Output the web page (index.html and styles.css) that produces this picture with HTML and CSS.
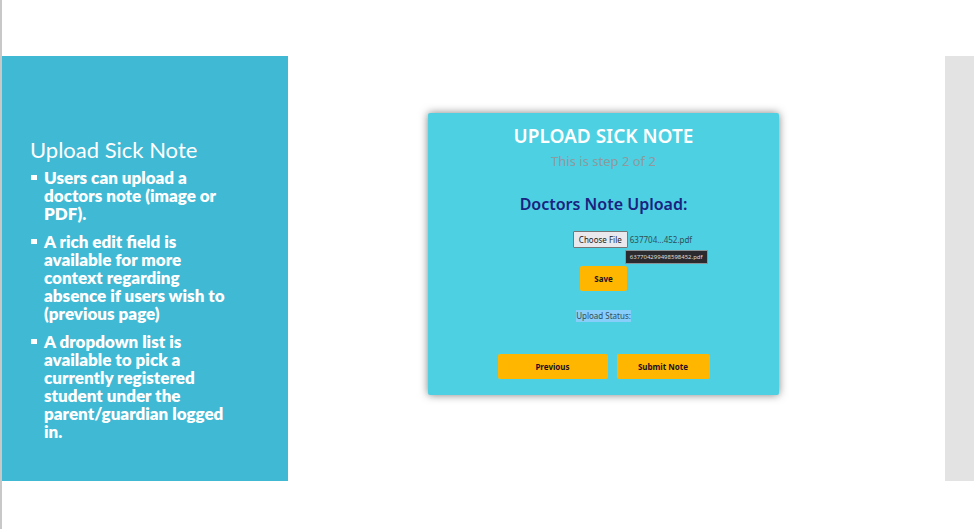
FILE: index.html
```html
<!DOCTYPE html>
<html lang="en">
<head>
<meta charset="utf-8">
<meta name="viewport" content="width=device-width, initial-scale=1">
<title>Upload Sick Note</title>
<link rel="stylesheet" href="styles.css">
</head>
<body>
<div class="slide">
  <aside class="notes">
    <h1 class="notes-title">Upload Sick Note</h1>
    <ul class="notes-list">
      <li>Users can upload a doctors note (image or PDF).</li>
      <li>A rich edit field is available for more context regarding absence if users wish to (previous page)</li>
      <li>A dropdown list is available to pick a currently registered student under the parent/guardian logged in.</li>
    </ul>
  </aside>
  <main class="stage">
    <form class="card">
      <h2 class="card-title">UPLOAD SICK NOTE</h2>
      <p class="step">This is step 2 of 2</p>
      <h3 class="section-title">Doctors Note Upload:</h3>
      <div class="file-row">
        <button type="button" class="choose">Choose File</button>
        <span class="file-name">637704...452.pdf<span class="tooltip" role="tooltip">637704299498598452.pdf</span></span>
      </div>
      <button type="button" class="btn save">Save</button>
      <p class="status"><mark>Upload Status:</mark></p>
      <div class="actions">
        <button type="button" class="btn previous">Previous</button>
        <button type="submit" class="btn submit">Submit Note</button>
      </div>
    </form>
  </main>
  <div class="edge"></div>
</div>
</body>
</html>
```
FILE: styles.css
```css
* {
  box-sizing: border-box;
}

body {
  margin: 0;
  background: #fff;
  font-family: "Noto Sans", "Open Sans", sans-serif;
}

h1, h2, h3, p, ul {
  margin: 0;
  padding: 0;
}

.slide {
  display: grid;
  grid-template-columns: 286px 1fr 29px;
  min-height: 100vh;
  padding: 56px 0 48px;
  border-left: 2px solid #c8c8c8;
}

.notes {
  padding: 80px 52px 36px 28px;
  background: #40b9d4;
  color: #fff;
  font-family: Lato, "Noto Sans", sans-serif;
}

.notes-title {
  font-size: 22px;
  line-height: 28px;
  font-weight: 400;
  white-space: nowrap;
}

.notes-list {
  margin-top: 5px;
  list-style: none;
  font-size: 17px;
  line-height: 18px;
  font-weight: 800;
}

.notes-list li {
  position: relative;
  padding-left: 14px;
}

.notes-list li + li {
  margin-top: 10px;
}

.notes-list li::before {
  content: "";
  position: absolute;
  left: 1px;
  top: 6px;
  width: 6px;
  height: 5px;
  background: #fff;
}

.edge {
  background: #e3e3e3;
}

.stage {
  display: flex;
  align-items: flex-start;
  justify-content: center;
  padding: 57px 26px 0 0;
}

.card {
  display: flex;
  flex-direction: column;
  align-items: center;
  width: 55%;
  min-width: 351px;
  padding: 10px 16px 16px;
  border-radius: 2px;
  background: #4dd0e2;
  box-shadow: 0 0 8px rgba(0, 0, 0, 0.5);
}

.card-title {
  color: #fff;
  font-size: 19px;
  line-height: 26px;
  font-weight: 600;
}

.step {
  color: #8e9a9e;
  font-size: 13px;
  line-height: 24px;
}

.section-title {
  margin-top: 19px;
  color: #1a237e;
  font-size: 16px;
  line-height: 24px;
  font-weight: 600;
}

.file-row {
  display: flex;
  align-items: center;
  gap: 2px;
  margin: 15px 0 0 58px;
  color: #2f4f58;
  font-size: 8px;
}

.choose {
  height: 17px;
  padding: 0 5px;
  border: 1px solid #767676;
  border-radius: 1px;
  background: #e9e9ed;
  color: #222;
  font: inherit;
}

.file-name {
  position: relative;
}

.tooltip {
  position: absolute;
  top: 16px;
  left: -5px;
  padding: 0 4px;
  border: 1px solid #8a9498;
  background: #2b2b2f;
  color: #ddd;
  font-size: 6px;
  line-height: 12px;
}

.btn {
  height: 25px;
  padding: 0;
  border: 0;
  border-radius: 2px;
  background: #ffb600;
  color: #1c1020;
  font: 700 8px "Noto Sans", sans-serif;
}

.save {
  width: 47px;
  margin-top: 18px;
}

.status {
  margin-top: 19px;
  font-size: 8px;
  line-height: 12px;
}

.status mark {
  display: block;
  background: #87cefa;
  color: #2f4f58;
}

.actions {
  display: flex;
  gap: 9px;
  margin-top: 32px;
}

.previous {
  width: 110px;
}

.submit {
  width: 93px;
}
```
